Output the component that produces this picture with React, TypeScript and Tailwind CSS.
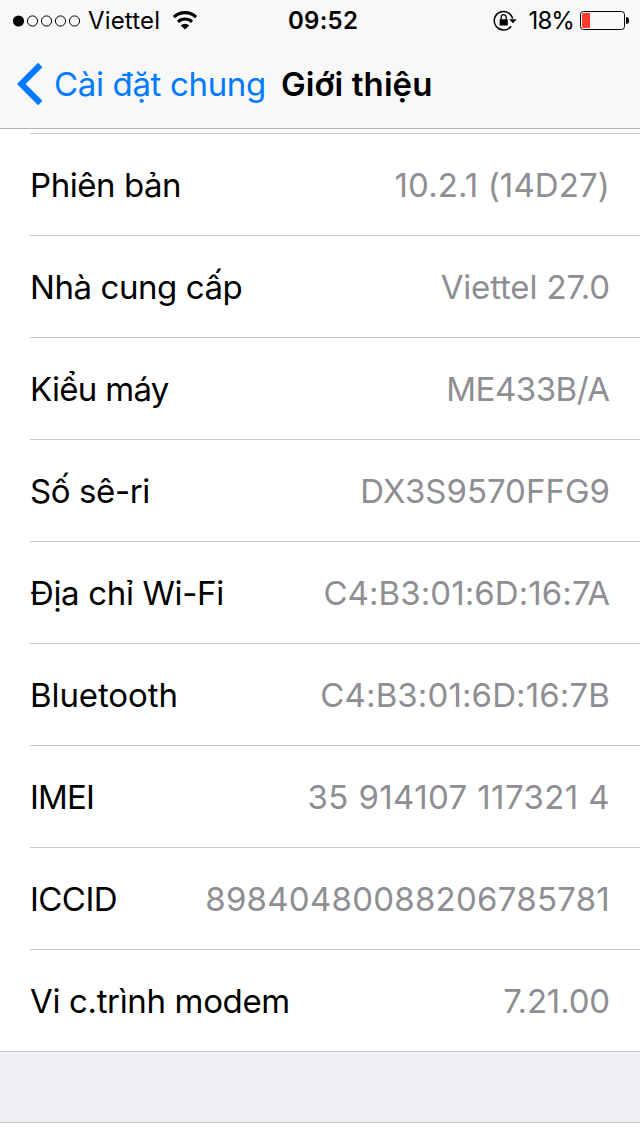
type Row = { label: string; labelClass: string; value: string; valueClass: string };

const rows: Row[] = [
  { label: 'Phiên bản', labelClass: 'tracking-[-0.45px]', value: '10.2.1 (14D27)', valueClass: 'tracking-[0.12px]' },
  { label: 'Nhà cung cấp', labelClass: 'tracking-[-0.43px]', value: 'Viettel 27.0', valueClass: 'tracking-[-0.15px]' },
  { label: 'Kiểu máy', labelClass: 'tracking-[-0.7px]', value: 'ME433B/A', valueClass: 'tracking-[-0.5px] mr-[0.5px]' },
  { label: 'Số sê-ri', labelClass: 'tracking-[-0.4px]', value: 'DX3S9570FFG9', valueClass: 'tracking-[0px]' },
  { label: 'Địa chỉ Wi-Fi', labelClass: 'tracking-[-0.35px]', value: 'C4:B3:01:6D:16:7A', valueClass: 'tracking-[0.08px]' },
  { label: 'Bluetooth', labelClass: 'tracking-[-0.1px]', value: 'C4:B3:01:6D:16:7B', valueClass: 'tracking-[0.12px]' },
  { label: 'IMEI', labelClass: 'tracking-[-0.8px]', value: '35 914107 117321 4', valueClass: 'tracking-[0.4px]' },
  { label: 'ICCID', labelClass: 'tracking-[-0.55px]', value: '89840480088206785781', valueClass: 'tracking-[0.25px]' },
  { label: 'Vi c.trình modem', labelClass: 'tracking-[-0.35px]', value: '7.21.00', valueClass: 'tracking-[-0.15px]' },
];

function SignalDots() {
  return (
    <svg width="70" height="14" viewBox="0 0 70 14" className="shrink-0">
      <circle cx="6.5" cy="7" r="5.6" fill="#000" />
      {[20.5, 34.5, 48.5, 62.5].map((cx) => (
        <circle key={cx} cx={cx} cy="7" r="5.1" fill="none" stroke="#000" strokeWidth="1" />
      ))}
    </svg>
  );
}

function WifiIcon() {
  return (
    <svg width="26" height="19" viewBox="0 0 26 19" className="shrink-0">
      <path d="M1.9 6.2A16 16 0 0 1 24.1 6.2" fill="none" stroke="#000" strokeWidth="3.2" />
      <path d="M6 10.8A10 10 0 0 1 20 10.8" fill="none" stroke="#000" strokeWidth="3.1" />
      <path d="M13 18.6L8.8 14.4A6 6 0 0 1 17.2 14.4Z" fill="#000" />
    </svg>
  );
}

function RotationLock() {
  return (
    <svg width="25" height="22" viewBox="0 0 25 22" className="shrink-0">
      <path d="M19.6 8.6A9.3 9.3 0 1 0 18.1 16.2" fill="none" stroke="#000" strokeWidth="1.5" />
      <path d="M16.1 9.2H23.7L20 13.2Z" fill="#000" />
      <rect x="6.6" y="9.3" width="8.2" height="6.2" rx="0.6" fill="#000" />
      <path d="M8.2 9.8V7.5A2.5 2.8 0 0 1 13.2 7.5V9.8" fill="none" stroke="#000" strokeWidth="1.3" />
    </svg>
  );
}

function Battery() {
  return (
    <div className="flex shrink-0 items-center">
      <div className="h-[19px] w-[45px] rounded-[3.5px] border border-black p-[1px]">
        <div className="h-[15px] w-2 rounded-l-[1.5px] bg-[#ff3b30]" />
      </div>
      <div className="ml-[1px] h-[7px] w-[3px] rounded-r-[3px] bg-black" />
    </div>
  );
}

export default function App() {
  return (
    <div className="flex h-[1136px] w-[640px] flex-col overflow-hidden bg-white font-['Inter',sans-serif] text-black">
      <header className="flex h-[129px] shrink-0 flex-col border-b border-[#b2b2b2] bg-[#f8f8f8]">
        <div className="grid h-[41px] grid-cols-[288px_1fr_auto] items-center pr-[11px] pl-3 text-[24px]">
          <div className="flex items-center">
            <SignalDots />
            <span className="ml-[6px] pt-px tracking-[0.15px]">Viettel</span>
            <span className="ml-3 flex">
              <WifiIcon />
            </span>
          </div>
          <span className="-ml-[12px] pt-px font-semibold tracking-[0.25px]">09:52</span>
          <div className="flex items-center">
            <RotationLock />
            <span className="mr-[6px] ml-[11px] pt-px tracking-[-0.9px]">18%</span>
            <Battery />
          </div>
        </div>
        <nav className="flex h-[87px] items-center pl-[17px] text-[33px]">
          <svg width="26" height="44" viewBox="0 0 26 44" className="-mt-[2px] shrink-0">
            <path d="M23.3 3L4.2 22L23.3 41" fill="none" stroke="#007aff" strokeWidth="6" />
          </svg>
          <span className="ml-[11px] tracking-[-0.34px] text-[#007aff]">Cài đặt chung</span>
          <h1 className="ml-[15px] font-semibold tracking-[0.1px]">Giới thiệu</h1>
        </nav>
      </header>
      <main className="flex shrink-0 flex-col pt-1">
        {rows.map((r) => (
          <div
            key={r.label}
            className="ml-[30px] flex h-[102px] items-center justify-between border-t border-[#c8c7cc] pt-[2px] pr-[30px] text-[33px]"
          >
            <span className={r.labelClass}>{r.label}</span>
            <span className={`text-[#8e8e93] ${r.valueClass}`}>{r.value}</span>
          </div>
        ))}
      </main>
      <div className="h-[72px] shrink-0 border-y border-[#c8c7cc] bg-[#efeff4]" />
    </div>
  );
}
